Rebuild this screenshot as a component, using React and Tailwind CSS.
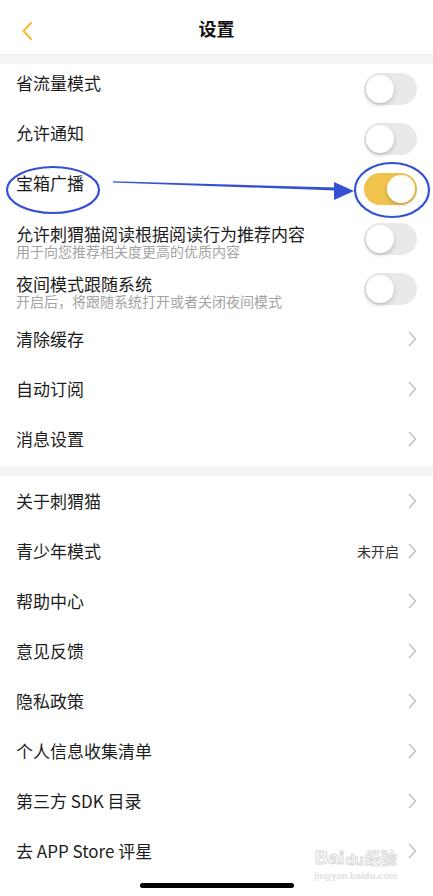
import React from "react";

const font = { fontFamily: '"Noto Sans CJK SC", "Noto Sans", sans-serif' };

function Toggle({ on }) {
  return (
    <div
      className={
        "w-[53px] h-[32px] rounded-full p-[2px] flex items-center shrink-0 " +
        (on ? "bg-[#f0c44c] justify-end" : "bg-[#e9e9eb] justify-start")
      }
    >
      <div className="w-[28px] h-[28px] rounded-full bg-white shadow-[0_2px_4px_rgba(0,0,0,0.2)]" />
    </div>
  );
}

function Chevron() {
  return (
    <svg width="9" height="16" viewBox="0 0 9 16" className="shrink-0">
      <path d="M1.5 1.5 L7.5 8 L1.5 14.5" fill="none" stroke="#c4c4c8" strokeWidth="1.6" strokeLinecap="round" strokeLinejoin="round" />
    </svg>
  );
}

function ToggleRow({ title, sub, on }) {
  return (
    <div className="h-[50px] flex items-center justify-between pl-[16px] pr-[16px]">
      {sub ? (
        <div className="flex flex-col mt-[6px]">
          <span className="text-[17px] leading-[19px] text-[#1c1c1c]">{title}</span>
          <span className="text-[14px] leading-[17px] text-[#a3a3a3]">{sub}</span>
        </div>
      ) : (
        <span className="text-[17px] leading-[22px] text-[#1c1c1c] mb-[12px]">{title}</span>
      )}
      <Toggle on={on} />
    </div>
  );
}

function LinkRow({ title, value }) {
  return (
    <div className="h-[50px] flex items-center justify-between pl-[16px] pr-[16px]">
      <span className="text-[17px] leading-[22px] text-[#1c1c1c]">{title}</span>
      <div className="flex items-center gap-[9px]">
        {value && <span className="text-[14px] text-[#333]">{value}</span>}
        <Chevron />
      </div>
    </div>
  );
}

export default function App() {
  return (
    <div className="relative w-[433px] h-[896px] bg-white overflow-hidden" style={font}>
      {/* Header */}
      <div className="h-[54px] flex items-center justify-center relative">
        <svg width="12" height="20" viewBox="0 0 12 20" className="absolute left-[21px] top-[21px]">
          <path d="M10 2 L2.5 10 L10 18" fill="none" stroke="#f2bf3a" strokeWidth="2.2" strokeLinecap="round" strokeLinejoin="round" />
        </svg>
        <span className="text-[18px] font-bold text-[#111] mt-[2px]">设置</span>
      </div>
      <div className="h-[10px] bg-[#f5f5f5] border-t border-[#ececec]" />

      <div className="flex flex-col">
        <ToggleRow title="省流量模式" />
        <ToggleRow title="允许通知" />
        <ToggleRow title="宝箱广播" on />
        <ToggleRow title="允许刺猬猫阅读根据阅读行为推荐内容" sub="用于向您推荐相关度更高的优质内容" />
        <ToggleRow title="夜间模式跟随系统" sub="开启后，将跟随系统打开或者关闭夜间模式" />
        <LinkRow title="清除缓存" />
        <LinkRow title="自动订阅" />
        <LinkRow title="消息设置" />
      </div>
      <div className="h-[2px]" />
      <div className="h-[10px] bg-[#f5f5f5]" />
      <div className="flex flex-col">
        <LinkRow title="关于刺猬猫" />
        <LinkRow title="青少年模式" value="未开启" />
        <LinkRow title="帮助中心" />
        <LinkRow title="意见反馈" />
        <LinkRow title="隐私政策" />
        <LinkRow title="个人信息收集清单" />
        <LinkRow title="第三方 SDK 目录" />
        <LinkRow title="去 APP Store 评星" />
      </div>

      {/* Home indicator */}
      <div className="absolute left-[140px] top-[883px] w-[154px] h-[5px] rounded-full bg-black" />

      {/* Baidu watermark */}
      <div className="absolute left-[314px] top-[848px] flex flex-col items-center text-[#dcdcdc] pointer-events-none" style={{ fontFamily: '"Liberation Sans", "Noto Sans CJK SC", sans-serif' }}>
        <div className="flex items-end leading-none">
          <span className="text-[19px] font-bold text-white" style={{ WebkitTextStroke: "1px #d8d8d8" }}>Bai</span>
          <span className="text-[15px] font-bold text-white mx-[1px]" style={{ WebkitTextStroke: "1px #d8d8d8" }}>du</span>
          <span className="text-[16px] font-bold text-white" style={{ WebkitTextStroke: "0.8px #d8d8d8" }}>经验</span>
        </div>
        <span className="text-[9.5px] leading-[12px] mt-[3px] text-[#e0e0e0] font-bold">jingyan.baidu.com</span>
      </div>

      {/* Annotations */}
      <svg className="absolute left-0 top-0 pointer-events-none" width="433" height="896" viewBox="0 0 433 896">
        <ellipse cx="53" cy="190" rx="46" ry="23" fill="none" stroke="#3450d4" strokeWidth="2.2" />
        <ellipse cx="392" cy="190" rx="37" ry="27" fill="none" stroke="#3450d4" strokeWidth="2.2" />
        <path d="M113 181.3 L336 187.5 L336 190.5 L113 182.5 Z" fill="#3450d4" />
        <path d="M334 182 L354 191 L334 200 Z" fill="#3450d4" />
      </svg>
    </div>
  );
}
